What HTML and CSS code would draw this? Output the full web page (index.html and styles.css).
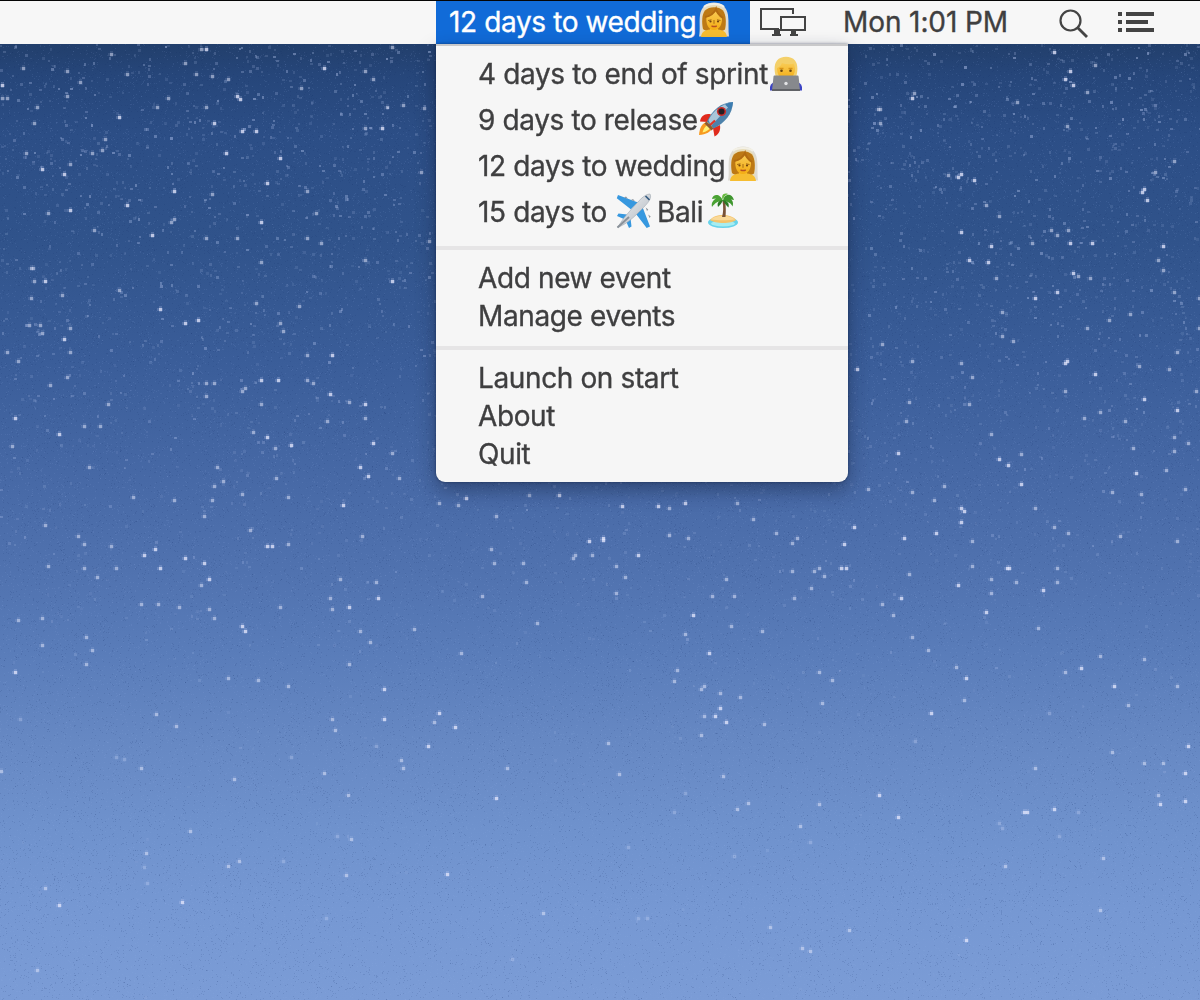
FILE: index.html
```html
<!DOCTYPE html>
<html lang="en">
<head>
<meta charset="utf-8">
<title>Event countdown</title>
<link rel="stylesheet" href="styles.css">
</head>
<body>
<svg class="symbols" aria-hidden="true">
  <defs>
    <linearGradient id="skin" x1="0" y1="0" x2="0" y2="1"><stop offset="0" stop-color="#f8cb55"/><stop offset="1" stop-color="#f4ac12"/></linearGradient>
    <linearGradient id="metal" x1="0" y1="0" x2="1" y2="1"><stop offset="0" stop-color="#f4f6f8"/><stop offset="1" stop-color="#aeb4bc"/></linearGradient>
    <symbol id="bride" viewBox="0 0 32 36">
      <path d="M1 34.500C2.500 28 1 20 2 13C3 5 9 .5 16 .5S29 5 30 13c1 7 0 15 1 21.500z" fill="#dedbd3"/>
      <path d="M4 33V15C4 7 9 3 16 3s12 4 12 12v18z" fill="#e9ddb8"/>
      <path d="M5 27C3.500 20 4 12 7 8.500 11 4 21 4 25 8.500c3 4 3.500 12 2 19-4 3-18 3-22-.500z" fill="#bd7915"/>
      <path d="M3 35c.5-5 4-7 9-7.500v-3h8v3c5 .5 8.500 2.500 9 7.500z" fill="#f6bd31"/>
      <path d="M8.500 14C13 13.500 16 11 18 8.500c1 3.500 3.500 5.500 6 6.500.5 7-2.500 13-8 13s-8.500-6-7.500-14z" fill="url(#skin)"/>
      <path d="M7 15c5-1 9-3 11-8 1 4 4 7 7 9" fill="none" stroke="#b26b10" stroke-width="2"/>
      <path d="M10 18.500l3.500-.7M19 17.800l3.500.7M16 18v3.800" stroke="#a56b14" stroke-width="1" fill="none"/>
      <circle cx="12.500" cy="19.500" r="1.100" fill="#74440d"/><circle cx="20" cy="19.500" r="1.100" fill="#74440d"/>
      <path d="M13.500 23.800q2.700 1.500 5.300 0" stroke="#b84f22" stroke-width="1.400" fill="none"/>
      <path d="M6 5C10 1 22 1 26 5" stroke="#f3f0e5" stroke-width="2" fill="none"/>
    </symbol>
    <symbol id="coder" viewBox="0 0 34 36">
      <path d="M1 34.500V31c1-4 5-6 10-7h12c5 1 9 3 10 7v3.500z" fill="#3b43c4"/>
      <path d="M7 21C5 15 5 8 8 4.500 12-.5 22-.5 26 4.500c3 3.500 3 10.500 1 16.500z" fill="#f4d06a"/>
      <path d="M8 12c3-1 4-3 5-5 4 1.500 9 1.500 12 .5l1 5c0 6-3 11-9 11s-9-5-9-11.500z" fill="url(#skin)"/>
      <path d="M10.500 12.500h4M19.500 12.500h4" stroke="#d79418" stroke-width="1.500"/>
      <circle cx="12.500" cy="14.800" r="1.300" fill="#6a440f"/><circle cx="21.500" cy="14.800" r="1.300" fill="#6a440f"/>
      <path d="M5.500 19.500h23q1 0 1.100 1L31 34.500H3L4.500 20.500q0-1 1-1z" fill="#87898d"/>
      <path d="M3 33h28v2H3z" fill="#606266"/>
      <circle cx="17" cy="27.500" r="1.700" fill="#e3e4e6"/>
    </symbol>
    <symbol id="rocket" viewBox="0 0 36 36">
      <path d="M13 13.500C7 12 3 15 2 20.500l8 .5zM22 24c1 6-2 10-5.500 11.500L15 27z" fill="#e02b1d"/>
      <path d="M9 21c-5 1-7.500 6-8 13 7-.5 12-3 14-8z" fill="#f79a20"/>
      <path d="M9.500 24c-3 1.500-4 4.500-5 7.500 4-1 6.500-2.500 8-5z" fill="#fff176"/>
      <path d="M9 20.500C14 9 23 1.500 35 1 34.500 13 27 22 15.500 27.500z" fill="#4d82ab"/>
      <path d="M10.500 19C15.500 9 24 3 35 1L13 25z" fill="#a9c6da"/>
      <path d="M27 3.500Q31 1.300 35 1q-.4 4-2.500 8z" fill="#3d7db1"/>
      <path d="M11.500 24.500L17 19.500" stroke="#df3426" stroke-width="2.200"/>
      <circle cx="23.500" cy="10.500" r="4.600" fill="#c92d2a"/><circle cx="23.500" cy="10.500" r="3" fill="#241f24"/>
      <path d="M8.500 20.500l7 7-2 2-7-7z" fill="#8a5a35"/>
    </symbol>
    <symbol id="plane" viewBox="0 0 36 36">
      <path d="M22 9.500L2 2 .8 5.200l14 11zM26.500 14L34 33.500l-3.300 1.500L20 21z" fill="#3798df"/>
      <path d="M11 21.500L2.500 20.500 1 23l8 3.500zM14.500 25l1 8.500L13 35l-3.500-8z" fill="#3798df"/>
      <path d="M8 4.400l2-1 2 2.300M15 7l2-1 2 2.300M31 18l1.300-1.500-2.600-2M33.500 25l1.200-1.500-2.500-2" fill="#8d949c"/>
      <path d="M1.500 34.500Q7 25 16 15.500C22 9 28 1 34 1c3 5-5 12-12 19-8 8-14 12-20.500 14.500z" fill="url(#metal)" stroke="#9fa7b0" stroke-width=".6"/>
      <path d="M29.500 3l4 4" stroke="#365c80" stroke-width="1.700"/>
      <path d="M1.500 34.500L13 24" stroke="#8b929a" stroke-width="2"/>
    </symbol>
    <symbol id="island" viewBox="0 0 32 36">
      <ellipse cx="16" cy="29.500" rx="15" ry="5.500" fill="#68d3ea"/>
      <ellipse cx="16" cy="30.500" rx="12" ry="3" fill="#a6edf1"/>
      <path d="M3 27c4-6.500 21-7 26 0-4 4-21 4-26 0z" fill="#f4c36b"/>
      <path d="M4 26.500c5-5 18-5 24 0-6 1-18 1-24 0z" fill="#f9d998"/>
      <path d="M15 24c1.500-5 1.500-10 .5-16l2.500-.5c1 6 1 11 .5 16.500z" fill="#785238"/>
      <path d="M16 8C13 0 6 1 5 6l4-.5C6 7.500 4 10 5 14c3-4 6-6 11-6z" fill="#4aa233"/>
      <path d="M16 8C17 0 25-.5 27 7l-3-.5c2 1.500 2.500 4 1.500 7C24 10 21 8.500 16 8z" fill="#3f962e"/>
      <path d="M16 7C11 8 10 10 11 14c2-2 4-4 5-7zM16 7c5 1 6.500 4 5.500 7.500-2-2-4.500-4-5.500-7.500z" fill="#2c7a25"/>
      <path d="M16 7C13 1.500 18-.5 21 1c-3 1-4.500 3-5 6z" fill="#68bb3f"/>
    </symbol>
  </defs>
</svg>
<div class="desktop">
  <canvas class="sky" width="1200" height="956"></canvas>
  <header class="menubar">
    <div class="countdown"><span class="label">12 days to wedding</span><svg class="emoji bride"><use href="#bride"/></svg></div>
    <svg class="icon displays" viewBox="0 0 46 28">
      <path d="M33 6V1H1v20h18" fill="none" stroke="#444" stroke-width="2"/>
      <path d="M21 9h24v13H21z" fill="none" stroke="#444" stroke-width="2"/>
      <path d="M14 21h6v5h1v2h-9v-2h2zM31 23h5v3h2v2h-8v-2h1z" fill="#444"/>
    </svg>
    <time class="clock">Mon 1:01 PM</time>
    <svg class="icon search" viewBox="0 0 30 30"><circle cx="11.500" cy="11.500" r="10" fill="none" stroke="#444" stroke-width="2.200"/><path d="M18.500 18.500L28 28" stroke="#444" stroke-width="2.800"/></svg>
    <svg class="icon list" viewBox="0 0 36 20" fill="#444"><path d="M0 0h4v4H0zM0 8h4v4H0zM0 16h4v4H0zM8 0h28v4H8zM8 8h22v4H8zM8 16h28v4H8z"/></svg>
  </header>
  <nav class="menu">
    <div class="group events">
      <div class="item"><span class="label">4 days to end of sprint</span><svg class="emoji coder"><use href="#coder"/></svg></div>
      <div class="item"><span class="label">9 days to release</span><svg class="emoji rocket"><use href="#rocket"/></svg></div>
      <div class="item"><span class="label">12 days to wedding</span><svg class="emoji bride"><use href="#bride"/></svg></div>
      <div class="item"><span class="label">15 days to</span><svg class="emoji plane"><use href="#plane"/></svg><span class="label">Bali</span><svg class="emoji island"><use href="#island"/></svg></div>
    </div>
    <div class="group">
      <div class="item">Add new event</div>
      <div class="item">Manage events</div>
    </div>
    <div class="group">
      <div class="item">Launch on start</div>
      <div class="item">About</div>
      <div class="item">Quit</div>
    </div>
  </nav>
</div>
<script src="sky.js"></script>
</body>
</html>
```

FILE: styles.css
```css
* { box-sizing: border-box; }

body {
  margin: 0;
  font: 28px/38px Inter, sans-serif;
  color: #3f3f40;
  -webkit-text-stroke: .35px currentColor;
}

.symbols { position: absolute; width: 0; height: 0; }

.desktop {
  position: relative;
  height: 1000px;
  overflow: hidden;
  background: linear-gradient(#223f6c 44px, #26467a 75px, #2c4e86 135px, #30538b 240px, #3a5d99 360px, #4769a6 480px, #5072af 570px, #597cb9 650px, #6688c3 740px, #6f92cd 830px, #7698d3 910px, #7b9cd6 1000px);
}

.sky { position: absolute; top: 44px; left: 0; }

.menubar {
  position: relative;
  display: flex;
  align-items: center;
  height: 44px;
  padding-left: 436px;
  border-top: 1px solid #050505;
  background: #f7f7f7;
}

.countdown {
  display: flex;
  align-items: center;
  width: 314px;
  height: 43px;
  padding: 0 0 1px 13px;
  background: #116bd8;
  color: #fff;
}

.label, .item { letter-spacing: -0.38px; white-space: nowrap; }

.icon { flex: none; }
.displays { width: 46px; height: 28px; margin: -2px 0 0 10px; }
.clock { width: 166px; margin: -2px 0 0 37px; letter-spacing: -0.1px; white-space: nowrap; }
.search { width: 30px; height: 30px; margin: 2px 0 0 50px; }
.list { width: 36px; height: 20px; margin: -2px 0 0 29px; }

.menu {
  position: relative;
  width: 412px;
  height: 438px;
  margin-left: 436px;
  border-top: 2px solid #c9c9ca;
  border-radius: 0 0 9px 9px;
  background: #f6f6f6;
  box-shadow: 0 8px 20px rgba(15, 25, 50, .42), 0 0 3px rgba(10, 20, 45, .5);
}

.group { padding: 9px 0 11px; }
.group + .group { border-top: 4px solid #e6e5e6; }
.events { padding-top: 5px; }

.item { display: flex; align-items: center; height: 38px; padding-left: 42px; }
.events .item { height: 46px; }

.emoji { flex: none; width: 36px; height: 36px; }
.emoji.bride { width: 32px; margin: -4px 0 0 2px; }
.emoji.coder { width: 34px; margin: -1px 0 0 1px; }
.emoji.rocket { margin-top: -2px; }
.emoji.plane { margin: -3px 5px 0 9px; }
.emoji.island { width: 32px; margin: -3px 0 0 4px; }
```

FILE: sky.js
```javascript
const ctx = document.querySelector('.sky').getContext('2d');

// Star positions as x,y pairs in desktop coordinates.
const bright = `2,85 237,96 240,99 214,123 242,131 256,131 382,128 42,169 64,174 127,205 70,210 174,191 226,153
280,158 267,183 152,235 261,222 160,309 185,323 198,320 64,339 332,355 206,49 119,117 324,68 392,281 45,281
1054,52 1070,71 1065,79 1073,85 912,98 958,177 961,174 974,180 961,232 969,260 988,262 991,246 1070,243 1092,243
1073,273 1057,292 1035,298 1144,189 1142,192 1147,200 1163,246 1065,363 1067,361 857,369
15,418 59,434 261,380 278,380 365,404 330,394 267,437 291,445 373,443 360,467 368,476 343,505 155,549 144,555
160,568 185,558 204,563 267,546 272,546 209,579 245,631 242,626 349,607 378,598 15,672 384,689
466,498 559,495 622,506 658,506 685,503 603,540 603,538 589,541 638,555 693,615 709,653 439,713 455,727 428,746
720,708 715,716 726,722 1095,374 1144,399 1177,410 898,453 999,459 1008,465 961,508 964,511 961,522 936,533 904,538
854,527 844,544 841,568 846,568 901,598 958,585 986,612 1009,568 1007,568 1021,484 1136,473 1043,590 931,713 1081,668
1114,686 966,678 59,905 182,902 496,798 447,874 1024,812 1027,812 1054,809 1188,746 1185,773 1185,801 879,795 898,817 1160,804 966,940 384,719`;

const medium = `23,68 67,71 80,82 2,98 7,98 67,96 37,107 34,123 157,107 168,98 185,63 196,74 201,49 212,76 228,79 206,107
365,71 373,79 387,107 365,128 301,88 26,153 70,164 105,139 92,153 102,150 127,74 48,213 174,219 171,222 94,230
212,194 206,238 237,238 261,262 307,191 316,213 307,238 321,243 365,260 33,268 31,268 34,281 62,295 31,298 119,290
256,303 299,306 280,323 283,331 307,355 70,352 7,352 18,361 40,325 42,333 29,325 70,328 392,47 111,54
1095,65 914,93 880,109 878,109 880,123 948,175 986,205 999,216 1032,243 1051,230 1057,235 1068,230 1078,276 1090,278
996,278 1155,172 1174,161 1158,260 1163,270 1174,292 1199,298 1199,328 1109,320 1130,314 1087,328 1002,336 1013,341
882,344 912,361 961,363 1139,366 1169,369 1177,352 1002,312 1067,126 1017,102 1087,92
67,377 50,385 12,446 84,426 100,426 108,404 89,467 206,383 214,383 206,396 307,380 313,383 349,402 365,418 261,404
245,388 242,391 327,421 253,432 275,448 392,453 399,478 217,467 223,481 214,486 212,500 242,494 288,497 276,478
133,497 174,500 204,516 362,536 45,525 78,536 84,544 111,546 116,568 250,530 288,544 48,566 201,585 97,577 84,568
141,604 158,604 179,607 209,609 214,618 280,607 330,598 332,609 376,582 340,579 360,631 370,642 349,664 42,618
18,620 86,637 92,650 86,664 42,645 288,686 228,678 258,680 439,503 458,505 529,495 669,508 737,503 753,519 776,533
797,538 792,543 688,538 669,535 575,555 592,555 573,558 616,566 625,577 616,593 494,563 523,563 526,582 491,549
496,516 482,596 537,623 414,629 461,653 712,596 734,596 685,634 731,626 762,631 792,571 794,598 726,579 677,670
674,681 704,686 701,689 720,693 740,697 704,716 701,735 764,724 434,722 403,768 401,760 608,743 619,774
723,776 748,803 507,768 972,377 969,404 909,402 906,421 991,434 1035,508 1021,454 1065,391 1196,391 1100,412
1084,418 1125,421 1174,437 1188,443 1174,451 1133,448 1166,470 1185,489 1141,494 1112,492 912,492 944,486 934,500
868,489 972,541 819,568 814,571 824,576 811,588 909,574 882,604 893,615 972,566 991,579 991,593 1016,582 1057,582
1057,568 1068,533 1054,527 1120,536 1177,541 1038,628 912,637 928,650 956,667 819,672 832,680 1065,672 1100,656
1144,659 1177,686 156,714 176,726 332,719 335,730 141,768 1,771 234,779 324,773 348,795 190,831 146,853 228,866
239,861 346,875 351,839 45,888 543,913 37,970 737,809 819,804 800,826 770,927 802,948 810,951 849,930 1100,910
1103,858 1005,866 1035,768 1112,752 1144,763 1163,763 1158,795 822,703 1128,705 964,700 403,105 424,108 429,241 421,172`;

const faint = `116,757 124,759 512,959 376,746 291,757 337,836 283,861 20,719 144,867 147,883 326,918 674,812 685,793
810,842 628,847 734,856 999,823 1002,828 1078,812 1059,836 915,741 1049,713 638,918 647,918`;

function star(x, y, core, halo) {
  y -= 44;
  ctx.fillStyle = `rgba(205,216,250,${halo})`;
  ctx.fillRect(x - 3, y - 1, 6, 3);
  ctx.fillRect(x - 1, y - 3, 3, 6);
  ctx.fillStyle = `rgba(232,234,252,${core})`;
  ctx.fillRect(x - 1, y - 1, 3, 3);
}

function plot(list, core, halo) {
  list.trim().split(/\s+/).forEach(pair => {
    const [x, y] = pair.split(',').map(Number);
    star(x, y, core, halo);
  });
}

let seed = 7193;
function random() {
  seed = (seed * 1664525 + 1013904223) % 4294967296;
  return seed / 4294967296;
}

// Fine grain over the gradient.
for (let i = 0; i < 90000; i++) {
  ctx.fillStyle = random() < .5 ? 'rgba(18,40,95,.12)' : 'rgba(155,180,235,.11)';
  ctx.fillRect(Math.floor(random() * 1200), Math.floor(random() * 956), 1, 1);
}

// Star dust, thinning out towards the horizon.
for (let i = 0; i < 8500; i++) {
  const x = Math.floor(random() * 1200);
  const y = Math.floor(random() * 956);
  const keep = Math.max(.02, 1 - y / 680);
  if (random() > keep) continue;
  const strength = (.12 + random() * random() * .38) * (1 - y / 1300);
  ctx.fillStyle = `rgba(190,205,245,${strength.toFixed(2)})`;
  ctx.fillRect(x, y, 2 + Math.floor(random() * 2), 2 + Math.floor(random() * 2));
}

plot(faint, .16, .08);
plot(medium, .4, .13);
plot(bright, .66, .22);
```
